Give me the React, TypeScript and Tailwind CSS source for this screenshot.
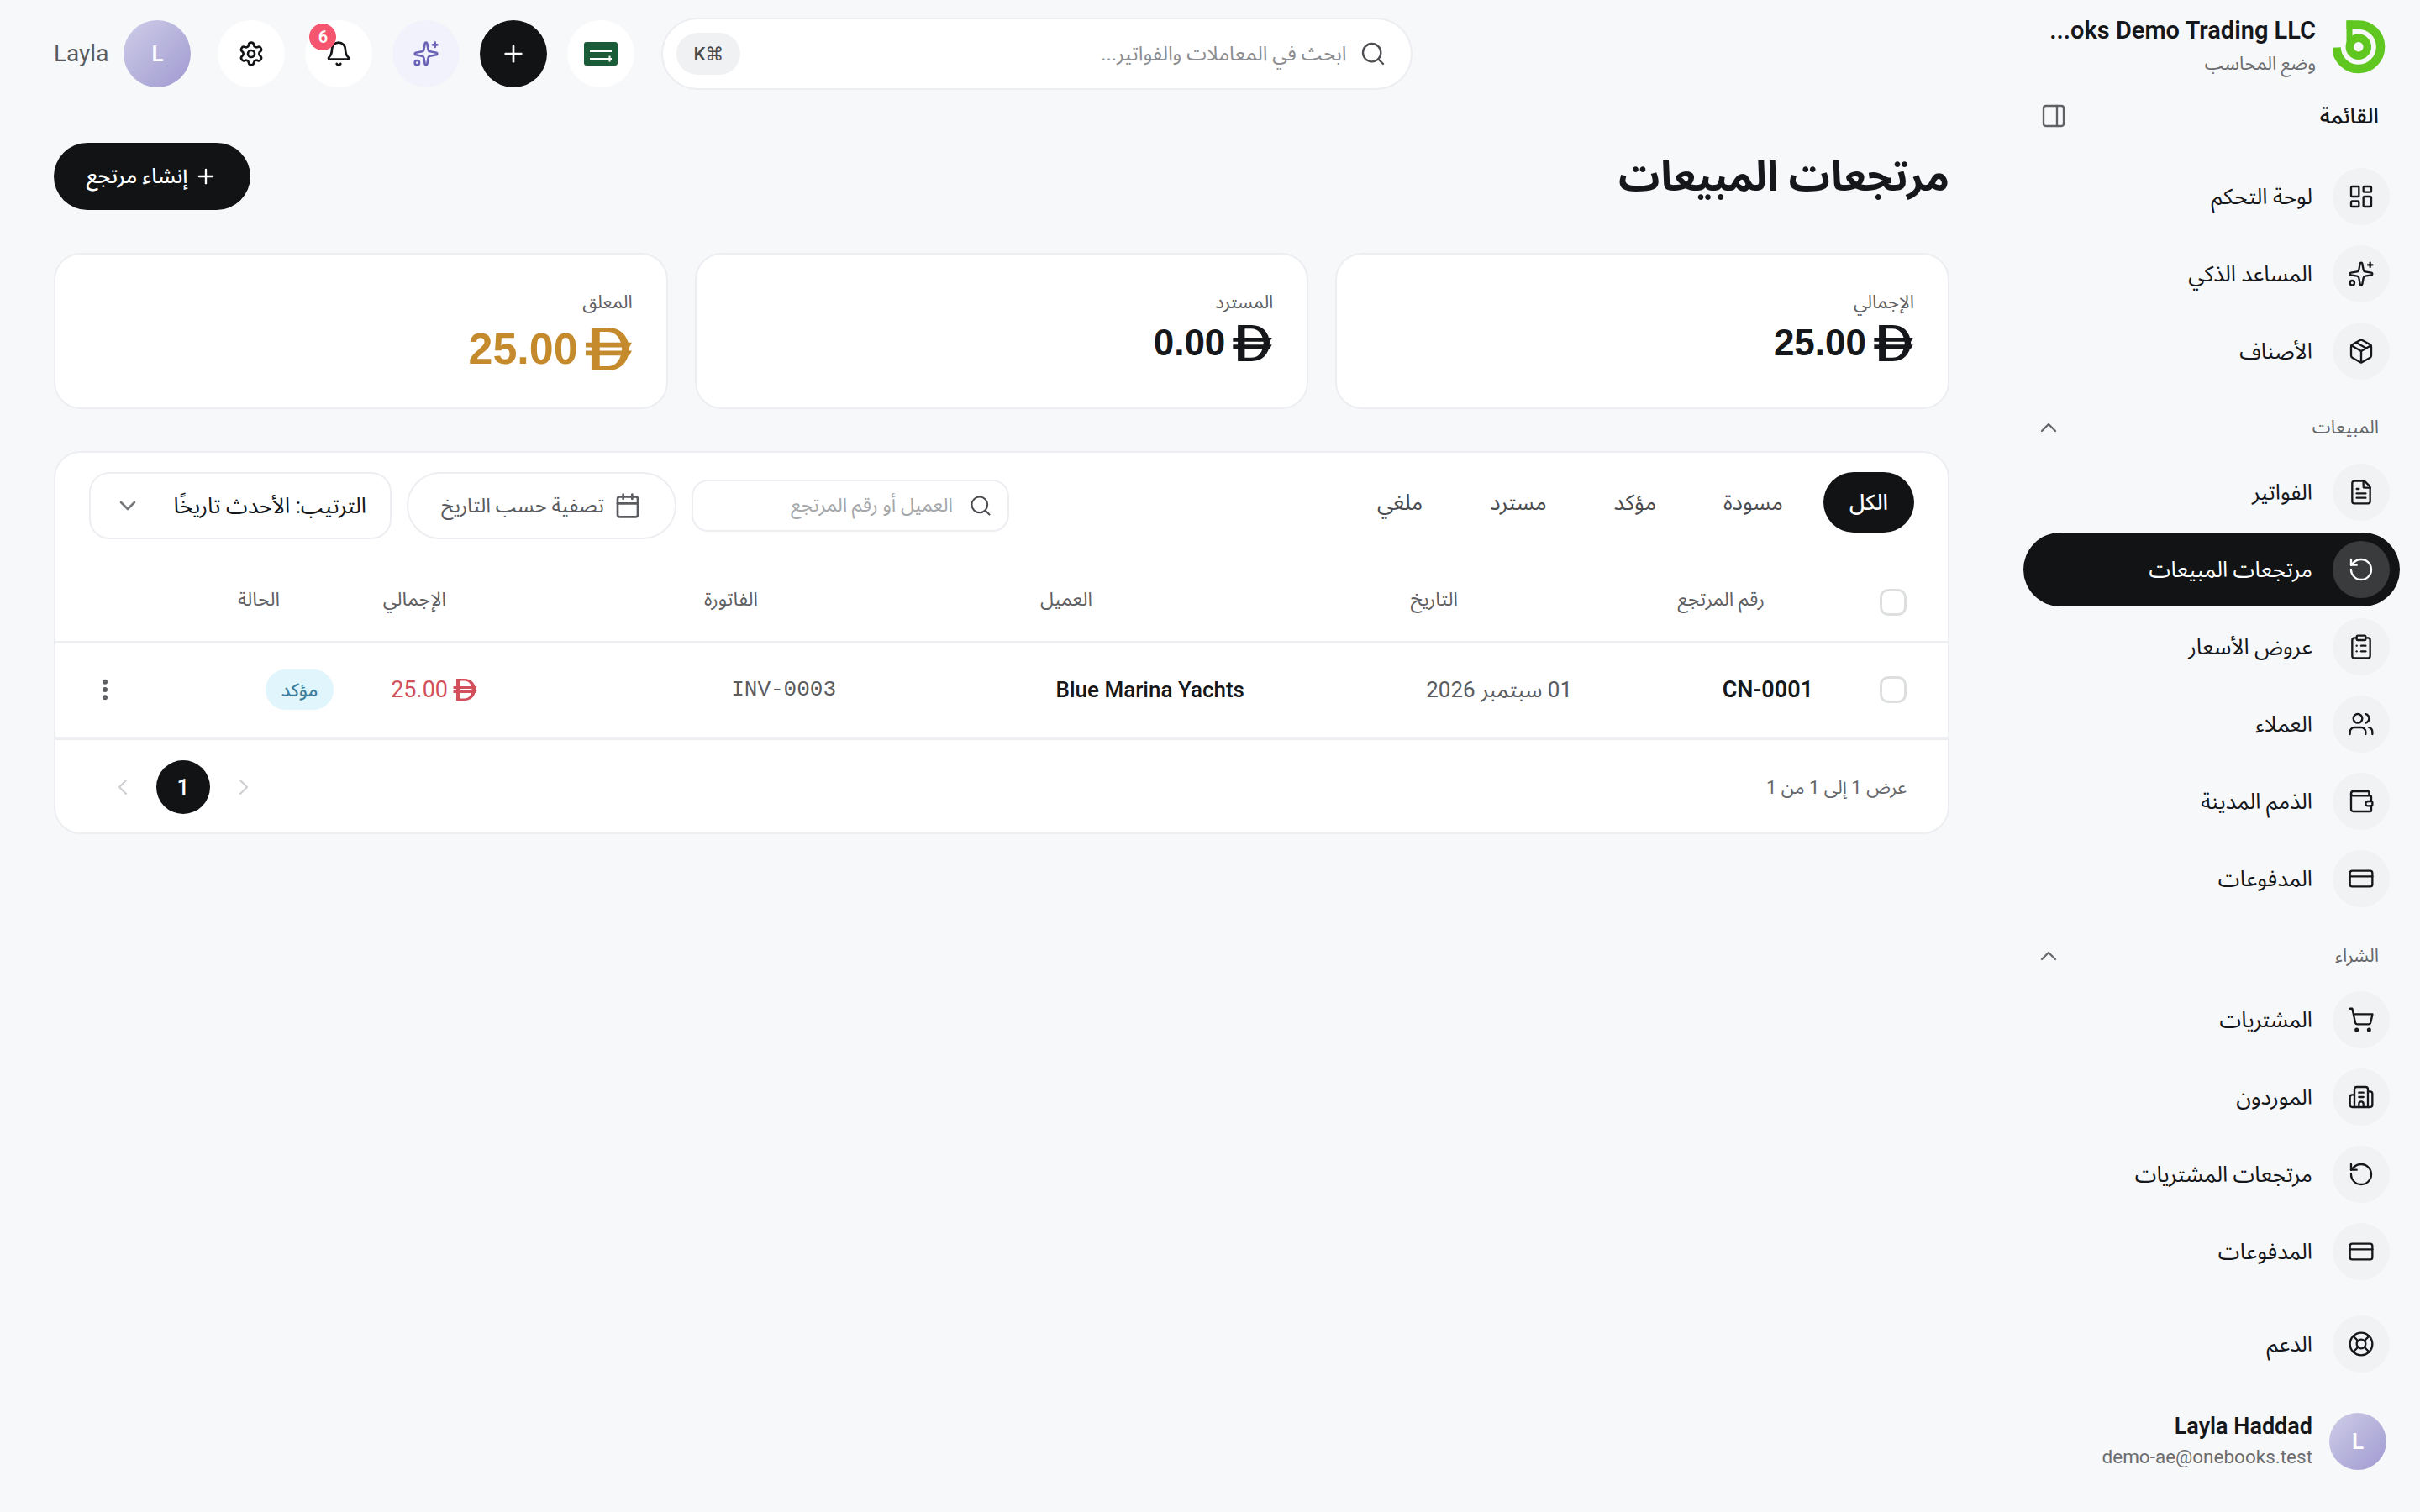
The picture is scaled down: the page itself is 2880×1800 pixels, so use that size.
import {
  Bell, Building2, Calendar, ChevronDown, ChevronLeft, ChevronRight, ChevronUp, ClipboardList, CreditCard,
  EllipsisVertical, FileText, LayoutDashboard, LifeBuoy, Package, PanelRight, Plus, RotateCcw, Search,
  Settings, ShoppingCart, Sparkles, Users, Wallet,
} from 'lucide-react';

const font = "font-['Roboto','Noto_Sans_Arabic','Noto_Sans','DejaVu_Sans',sans-serif]";

// the dirham sign has no glyph in the installed fonts, so it is drawn
function Dirham({ className }: { className: string }) {
  return (
    <svg viewBox="0 0 56 52" className={className} fill="currentColor">
      <path fillRule="evenodd" d="M7 0h20c15 0 25 10 26 26 -1 16-11 26-26 26H7V0zm10 5v42h9c11 0 17-8 18-21 -1-13-7-21-18-21H17z" />
      <path d="M0 18h56l-3 6H0zM0 28h56l-3 6H0z" />
    </svg>
  );
}

function Logo() {
  return (
    <svg viewBox="11.5 9 64 64" className="h-16 w-16 shrink-0" fill="none" stroke="#5fc71f">
      <path d="M16 41.5A26.3 26.3 0 1 0 42.3 14.4H28" strokeWidth="10.5" />
      <circle cx="42.3" cy="40.7" r="10.5" strokeWidth="9.5" />
      <path d="M31.5 9.5V41" strokeWidth="7" />
    </svg>
  );
}

function NavItem({ icon: Icon, label, active }: { icon: typeof Bell; label: string; active?: boolean }) {
  return (
    <div className={`flex h-[88px] items-center gap-6 rounded-full pr-3 ${active ? 'bg-[#111315] text-white' : 'text-[#15171a]'}`}>
      <span className={`flex h-[68px] w-[68px] shrink-0 items-center justify-center rounded-full ${active ? 'bg-[#3a3b3d]' : 'bg-[#f1f2f3]'}`}>
        <Icon size={32} strokeWidth={1.75} />
      </span>
      <span className="text-[26px] leading-none">{label}</span>
    </div>
  );
}

function NavSection({ title, className }: { title: string; className: string }) {
  return (
    <div className={`flex h-[26px] items-center justify-between pl-[14px] pr-[25px] text-[#66686b] ${className}`}>
      <span className="text-[22px] leading-none">{title}</span>
      <ChevronUp size={32} strokeWidth={1.75} />
    </div>
  );
}

function Sidebar() {
  return (
    <aside className="flex h-[1800px] w-[500px] shrink-0 flex-col pl-7 pr-6 pt-6">
      <div className="flex h-[64px] items-center gap-5 pr-4">
        <Logo />
        <div className="flex flex-col items-start gap-[6px]">
          <span dir="ltr" className="whitespace-nowrap text-[29px] font-semibold leading-[34px] text-[#15171a]">...oks Demo Trading LLC</span>
          <span className="text-[22px] leading-[34px] text-[#6b6d70]">وضع المحاسب</span>
        </div>
      </div>
      <div className="mt-[34px] flex h-8 items-center justify-between pl-5 pr-[25px]">
        <span className="text-[26px] font-medium leading-none text-[#15171a]">القائمة</span>
        <PanelRight size={32} strokeWidth={1.75} className="text-[#5f6164]" />
      </div>
      <div className="mt-[36px] flex flex-col gap-1">
        <NavItem icon={LayoutDashboard} label="لوحة التحكم" />
        <NavItem icon={Sparkles} label="المساعد الذكي" />
        <NavItem icon={Package} label="الأصناف" />
      </div>
      <NavSection title="المبيعات" className="mt-[34px]" />
      <div className="mt-[20px] flex flex-col gap-1">
        <NavItem icon={FileText} label="الفواتير" />
        <NavItem icon={RotateCcw} label="مرتجعات المبيعات" active />
        <NavItem icon={ClipboardList} label="عروض الأسعار" />
        <NavItem icon={Users} label="العملاء" />
        <NavItem icon={Wallet} label="الذمم المدينة" />
        <NavItem icon={CreditCard} label="المدفوعات" />
      </div>
      <NavSection title="الشراء" className="mt-[35px]" />
      <div className="mt-[19px] flex flex-col gap-1">
        <NavItem icon={ShoppingCart} label="المشتريات" />
        <NavItem icon={Building2} label="الموردون" />
        <NavItem icon={RotateCcw} label="مرتجعات المشتريات" />
        <NavItem icon={CreditCard} label="المدفوعات" />
      </div>
      <div className="mt-[22px]">
        <NavItem icon={LifeBuoy} label="الدعم" />
      </div>
      <div className="mt-[36px] flex items-center gap-5 pr-4">
        <Avatar size="h-[68px] w-[68px]" />
        <div className="flex flex-col items-start">
          <span className="text-[27px] font-semibold leading-[36px] text-[#15171a]">Layla Haddad</span>
          <span className="text-[22.5px] leading-[36px] text-[#6b6d70]">demo-ae@onebooks.test</span>
        </div>
      </div>
    </aside>
  );
}

function Avatar({ size }: { size: string }) {
  return (
    <span className={`flex shrink-0 items-center justify-center rounded-full bg-gradient-to-br from-[#cfcde8] to-[#a09ad0] text-[26px] font-semibold text-white ${size}`}>L</span>
  );
}

function RoundButton({ className, children }: { className: string; children: React.ReactNode }) {
  return <span className={`relative flex h-20 w-20 shrink-0 items-center justify-center rounded-full ${className}`}>{children}</span>;
}

function Topbar() {
  return (
    <header className="flex h-[128px] items-center justify-end">
      <div className="flex h-[86px] w-[894px] items-center gap-4 rounded-full border-2 border-[#eceef1] bg-white pl-4 pr-[29px]">
        <Search size={32} strokeWidth={1.75} className="shrink-0 text-[#4a4c4f]" />
        <span className="flex-1 text-[24px] text-[#8c8e91]">ابحث في المعاملات والفواتير...</span>
        <span className="flex h-[50px] w-[76px] items-center justify-center rounded-full bg-[#f0f1f3] text-[22px] font-medium text-[#4a4c4f]">⌘K</span>
      </div>
      <div className="mr-8 flex items-center gap-6">
        <RoundButton className="bg-white">
          <svg viewBox="0 0 40 28" className="h-7 w-10">
            <rect width="40" height="28" rx="3" fill="#1a5c38" />
            <path d="M7 11h26M7 20h26M30.5 16.5v7" stroke="#fff" strokeWidth="2" fill="none" />
          </svg>
        </RoundButton>
        <RoundButton className="bg-[#111315] text-white"><Plus size={32} strokeWidth={2} /></RoundButton>
        <RoundButton className="bg-[#f2f2fc] text-[#6b63b5]"><Sparkles size={32} strokeWidth={2} /></RoundButton>
        <RoundButton className="bg-white text-[#111315]">
          <Bell size={32} strokeWidth={2} />
          <span className="absolute right-[43px] top-1 flex h-8 w-8 items-center justify-center rounded-full bg-[#f5556f] text-[20px] font-semibold text-white">6</span>
        </RoundButton>
        <RoundButton className="bg-white text-[#111315]"><Settings size={32} strokeWidth={2} /></RoundButton>
        <div className="mr-2 flex items-center gap-[18px]">
          <Avatar size="h-20 w-20" />
          <span className="text-[28px] text-[#5a5c5f]">Layla</span>
        </div>
      </div>
    </header>
  );
}

function StatCard({ label, value, valueClass, iconClass }: { label: string; value: string; valueClass: string; iconClass: string }) {
  return (
    <div className="h-[186px] rounded-[32px] border-2 border-[#eceef1] bg-white px-10 pt-[38px]">
      <div className="text-[22px] leading-[38px] text-[#5f6164]">{label}</div>
      <div className={`flex items-center gap-2 font-['Liberation_Sans'] font-bold leading-none ${valueClass}`}>
        <Dirham className={iconClass} />
        <span>{value}</span>
      </div>
    </div>
  );
}

function Returns() {
  const tabs = ['مسودة', 'مؤكد', 'مسترد', 'ملغي'];

  return (
    <section className="mt-[50px] h-[456px] rounded-[32px] border-2 border-[#eceef1] bg-white">
      <div className="flex h-[134px] items-start justify-between px-10 pt-[23px]">
        <div className="flex items-center gap-4">
          <span className="flex h-[72px] w-[108px] items-center justify-center rounded-full bg-[#111315] text-[26px] font-medium text-white">الكل</span>
          {tabs.map(tab =>
            <span key={tab} className="flex h-[72px] items-center px-8 text-[26px] text-[#4a4c4f]">{tab}</span>
          )}
        </div>
        <div className="flex items-center gap-[18px]">
          <div className="flex h-[62px] w-[378px] items-center gap-[19px] rounded-[20px] border-2 border-[#eceef1] pl-5 pr-[18px]">
            <Search size={28} strokeWidth={1.75} className="shrink-0 text-[#4a4c4f]" />
            <span className="whitespace-nowrap text-[23px] text-[#a5a7aa]">العميل أو رقم المرتجع</span>
          </div>
          <div className="flex h-20 w-[321px] items-center gap-3 rounded-full border-2 border-[#eceef1] px-10 text-[24px] text-[#5a5c5f]">
            <Calendar size={32} strokeWidth={2} className="shrink-0" />
            <span className="whitespace-nowrap">تصفية حسب التاريخ</span>
          </div>
          <div className="flex h-20 w-[360px] items-center justify-between rounded-[24px] border-2 border-[#eceef1] px-7">
            <span className="whitespace-nowrap text-[26px] text-[#15171a]">الترتيب: الأحدث تاريخًا</span>
            <ChevronDown size={32} strokeWidth={2} className="text-[#77797c]" />
          </div>
        </div>
      </div>

      <div className="grid h-[92px] grid-cols-[169px_365px_435px_398px_371px_198px_1fr] items-center border-b-2 border-[#eceef1] pb-2 pr-[49px] text-[23px] text-[#5f6164]">
        <Checkbox className="mt-[5px]" />
        <span>رقم المرتجع</span>
        <span>التاريخ</span>
        <span>العميل</span>
        <span>الفاتورة</span>
        <span>الإجمالي</span>
        <span>الحالة</span>
      </div>

      <div className="grid h-[116px] grid-cols-[111px_287px_390px_486px_427px_171px_256px_1fr] items-center border-b-4 border-[#eceef1] pr-[49px] text-[26px]">
        <Checkbox />
        <span className="text-[27px] font-semibold text-[#15171a]">CN-0001</span>
        <span className="text-[#5a5c5f]">01 سبتمبر 2026</span>
        <span className="font-medium text-[#15171a]">Blue Marina Yachts</span>
        <span className="font-['Liberation_Mono'] text-[#5a5c5f]">INV-0003</span>
        <span className="flex items-center gap-[6px] text-[27px] text-[#d2505c]">
          <Dirham className="h-[26px] w-[29px]" />
          <span>25.00</span>
        </span>
        <span className="flex h-12 w-[81px] items-center justify-center rounded-full bg-[#e0f5fc] text-[22px] font-medium text-[#3f7f9c]">مؤكد</span>
        <EllipsisVertical size={32} strokeWidth={2.5} className="text-[#5a5c5f]" />
      </div>

      <div className="flex h-[112px] items-center justify-between pl-12 pr-[49px]">
        <span className="text-[22px] text-[#66686b]">عرض 1 إلى 1 من 1</span>
        <div className="flex items-center gap-2">
          <span className="flex h-16 w-16 items-center justify-center text-[#cfd1d4]"><ChevronRight size={32} strokeWidth={1.75} /></span>
          <span className="flex h-16 w-16 items-center justify-center rounded-full bg-[#111315] text-[26px] font-medium text-white">1</span>
          <span className="flex h-16 w-16 items-center justify-center text-[#cfd1d4]"><ChevronLeft size={32} strokeWidth={1.75} /></span>
        </div>
      </div>
    </section>
  );
}

function Checkbox({ className = '' }: { className?: string }) {
  return <span className={`block h-8 w-8 rounded-[10px] border-[3px] border-[#dcdee0] bg-white ${className}`} />;
}

export default function App() {
  return (
    <div dir="rtl" className={`flex min-h-[1800px] bg-[#f7f8fa] ${font}`}>
      <Sidebar />
      <main className="flex-1 pl-16 pr-[60px]">
        <Topbar />
        <div className="mt-[42px] flex h-20 items-center justify-between">
          <h1 className="text-[49px] font-bold leading-none text-[#15171a]">مرتجعات المبيعات</h1>
          <span className="flex h-20 w-[234px] items-center justify-center gap-2 rounded-full bg-[#111315] text-[25px] font-medium text-white">
            <Plus size={28} strokeWidth={2} />
            إنشاء مرتجع
          </span>
        </div>
        <div className="mt-[51px] grid grid-cols-3 gap-8">
          <StatCard label="الإجمالي" value="25.00" valueClass="mt-[7px] text-[44px] text-[#15171a]" iconClass="h-[43px] w-[49px]" />
          <StatCard label="المسترد" value="0.00" valueClass="mt-[7px] text-[44px] text-[#15171a]" iconClass="h-[43px] w-[49px]" />
          <StatCard label="المعلق" value="25.00" valueClass="mt-[10px] text-[52px] text-[#c48a2c]" iconClass="h-[51px] w-[57px]" />
        </div>
        <Returns />
      </main>
    </div>
  );
}
